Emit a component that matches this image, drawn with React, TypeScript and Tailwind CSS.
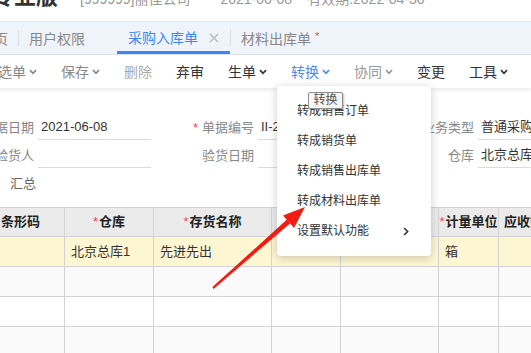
import React from 'react';

const Chevron = ({ className = '' }: { className?: string }) => (
  <svg width="8" height="6" viewBox="0 0 8 6" className={className}>
    <path d="M1 1.2 L4 4.3 L7 1.2" fill="none" stroke="currentColor" strokeWidth="1.7" />
  </svg>
);

const Sep = () => <div className="w-px h-[17px] bg-[#dcdfe4]" />;

const ToolBtn = ({ label, color, chevron }: { label: string; color: string; chevron?: boolean }) => (
  <div className={`flex items-center px-[12px] ${color}`}>
    <span className="text-[14px] leading-[20px]">{label}</span>
    {chevron && <Chevron className="ml-[3px]" />}
  </div>
);

const Field = ({ label, value, star }: { label: string; value?: string; star?: boolean }) => (
  <div className="flex w-[220px] shrink-0">
    <div className="w-[72px] h-[25px] flex items-center justify-end text-[13px] text-[#888]">
      {star && <span className="text-[#f0474c] mr-[4px]">*</span>}
      <span>{label}</span>
    </div>
    <div className="ml-[4px] w-[113px] h-[25px] border-b border-[#dcdcdc] flex items-center pl-[3px] text-[13px] text-[#333] whitespace-nowrap overflow-hidden">
      {value}
    </div>
  </div>
);

const HCell = ({ w, label, star }: { w: string; label?: string; star?: boolean }) => (
  <div className={`${w} shrink-0 h-full border-r border-[#d3d3d3] flex items-center justify-center text-[13px] font-bold text-[#222] whitespace-nowrap`}>
    {star && <span className="text-[#f0474c] font-normal mr-[1px]">*</span>}
    {label}
  </div>
);

const Cell = ({ w, value }: { w: string; value?: string }) => (
  <div className={`${w} shrink-0 h-full border-r border-[#d3d3d3] flex items-center pl-[6px] text-[13px] text-[#333] whitespace-nowrap`}>
    {value}
  </div>
);

const Row = ({ bg, values = [] }: { bg: string; values?: string[] }) => (
  <div className={`flex h-[30px] border-b border-[#d3d3d3] ${bg}`}>
    <Cell w="w-[88px]" value={values[0]} />
    <Cell w="w-[89px]" value={values[1]} />
    <Cell w="w-[118px]" value={values[2]} />
    <Cell w="w-[69px]" value={values[3]} />
    <Cell w="w-[98px]" value={values[4]} />
    <Cell w="w-[60px]" value={values[5]} />
    <Cell w="w-[90px]" value={values[6]} />
  </div>
);

const menuItems = ['转成销售订单', '转成销货单', '转成销售出库单', '转成材料出库单'];

export default function App() {
  return (
    <div className="relative w-[531px] h-[353px] overflow-hidden bg-white font-['Liberation_Sans','Noto_Sans_CJK_SC',sans-serif]">
      {/* header, scrolled up */}
      <div className="h-[22px] border-b border-[#e3e6ea] overflow-hidden">
        <div className="flex items-baseline -mt-[17px] -ml-[8px] whitespace-nowrap">
          <span className="text-[22px] leading-[28px] font-bold text-[#333]">专业版</span>
          <span className="ml-[22px] text-[14px] text-[#9a9a9a]">[999999]丽佳公司</span>
          <span className="ml-[30px] text-[14px] text-[#9a9a9a]">2021-06-08</span>
          <span className="ml-[15px] text-[14px] text-[#9a9a9a]">有效期:2022-04-30</span>
        </div>
      </div>

      {/* tabs */}
      <div className="h-[33px] bg-[#eff4fb] border-b border-[#dfe4ea] flex items-stretch -ml-[31px] whitespace-nowrap text-[14px]">
        <div className="flex items-center pl-[11px] pr-[10px] pt-[3px] text-[#888]">首页</div>
        <div className="self-center w-px h-[16px] bg-[#d8dde4]" />
        <div className="flex items-center w-[98px] pl-[10px] pt-[3px] text-[#888]">用户权限</div>
        <div className="flex items-center w-[113px] pl-[11px] pt-[3px] text-[#3d87f5] border-b-[3px] border-[#3d87f5]">
          <span>采购入库单</span>
          <svg width="10" height="10" viewBox="0 0 10 10" className="ml-[11px] text-[#bbb]">
            <path d="M1 1 L9 9 M9 1 L1 9" stroke="currentColor" strokeWidth="1.4" />
          </svg>
        </div>
        <div className="self-center w-px h-[16px] bg-[#d8dde4]" />
        <div className="flex items-center pl-[10px] pt-[3px] text-[#888]">
          <span>材料出库单</span>
          <span className="ml-[4px] -mt-[6px] text-[11px] text-[#f0474c]">*</span>
        </div>
      </div>

      {/* toolbar */}
      <div className="relative z-10 h-[33px] flex items-center -ml-[14px] bg-white shadow-[0_2px_4px_rgba(0,0,0,0.09)] whitespace-nowrap">
        <ToolBtn label="选单" color="text-[#888]" chevron />
        <ToolBtn label="保存" color="text-[#888]" chevron />
        <ToolBtn label="删除" color="text-[#aaa]" />
        <Sep />
        <ToolBtn label="弃审" color="text-[#333]" />
        <Sep />
        <ToolBtn label="生单" color="text-[#333]" chevron />
        <ToolBtn label="转换" color="text-[#4a8cf5]" chevron />
        <ToolBtn label="协同" color="text-[#999]" chevron />
        <Sep />
        <ToolBtn label="变更" color="text-[#333]" />
        <Sep />
        <ToolBtn label="工具" color="text-[#333]" chevron />
        <ToolBtn label="取消" color="text-[#333]" />
      </div>

      {/* form */}
      <div className="pt-[27px] -ml-[38px] flex flex-col gap-[3px] whitespace-nowrap">
        <div className="flex">
          <Field label="单据日期" value="2021-06-08" />
          <Field label="单据编号" value="II-2021-06-08-0001" star />
          <Field label="业务类型" value="普通采购" />
        </div>
        <div className="flex">
          <Field label="验货人" />
          <Field label="验货日期" />
          <Field label="仓库" value="北京总库" />
        </div>
        <div className="flex h-[25px] items-center pl-[48px] text-[13px] text-[#666]">汇总</div>
      </div>

      {/* grid */}
      <div className="mt-[11px] -ml-[23px]">
        <div className="flex h-[30px] border-y border-[#d3d3d3] bg-[#ebebeb]">
          <HCell w="w-[88px]" label="条形码" />
          <HCell w="w-[89px]" label="仓库" star />
          <HCell w="w-[118px]" label="存货名称" star />
          <HCell w="w-[69px]" label="规格" />
          <HCell w="w-[98px]" label="批号" />
          <HCell w="w-[60px]" label="计量单位" star />
          <div className="w-[90px] shrink-0 h-full flex items-center pl-[5px] text-[13px] font-bold text-[#222]">应收数量</div>
        </div>
        <Row bg="bg-[#fdf6d3]" values={['', '北京总库1', '先进先出', '', '', '箱', '']} />
        <Row bg="bg-[#fafafa]" />
        <Row bg="bg-white" />
        <Row bg="bg-[#fafafa]" />
      </div>

      {/* dropdown menu */}
      <div className="absolute left-[277px] top-[86px] z-20 w-[154px] py-[10px] bg-white rounded-[4px] shadow-[0_2px_10px_rgba(0,0,0,0.2)] text-[12px] text-[#333] whitespace-nowrap">
        {menuItems.map((m) => (
          <div key={m} className="h-[30px] flex items-center pl-[20px]">{m}</div>
        ))}
        <div className="h-[30px] flex items-center justify-between pl-[20px] pr-[22px]">
          <span>设置默认功能</span>
          <svg width="6" height="9" viewBox="0 0 6 9">
            <path d="M1.2 1 L4.6 4.5 L1.2 8" fill="none" stroke="#333" strokeWidth="1.6" />
          </svg>
        </div>
      </div>

      {/* tooltip */}
      <div className="absolute left-[308px] top-[92px] z-30 w-[35px] h-[17px] flex items-center justify-center border border-[#8f8f8f] bg-[#f6f6f6] rounded-[2px] shadow-[1px_1px_2px_rgba(0,0,0,0.25)] text-[12px] leading-[15px] text-[#555]">
        转换
      </div>

      {/* annotation arrow */}
      <svg className="absolute inset-0 z-40 pointer-events-none" width="531" height="353" viewBox="0 0 531 353">
        <polygon points="212.4,287.1 213.6,288.9 290.1,223.4 286.9,219.6" fill="#f21d12" />
        <polygon points="305,207 294,228 283,215.5" fill="#f21d12" />
      </svg>
    </div>
  );
}
